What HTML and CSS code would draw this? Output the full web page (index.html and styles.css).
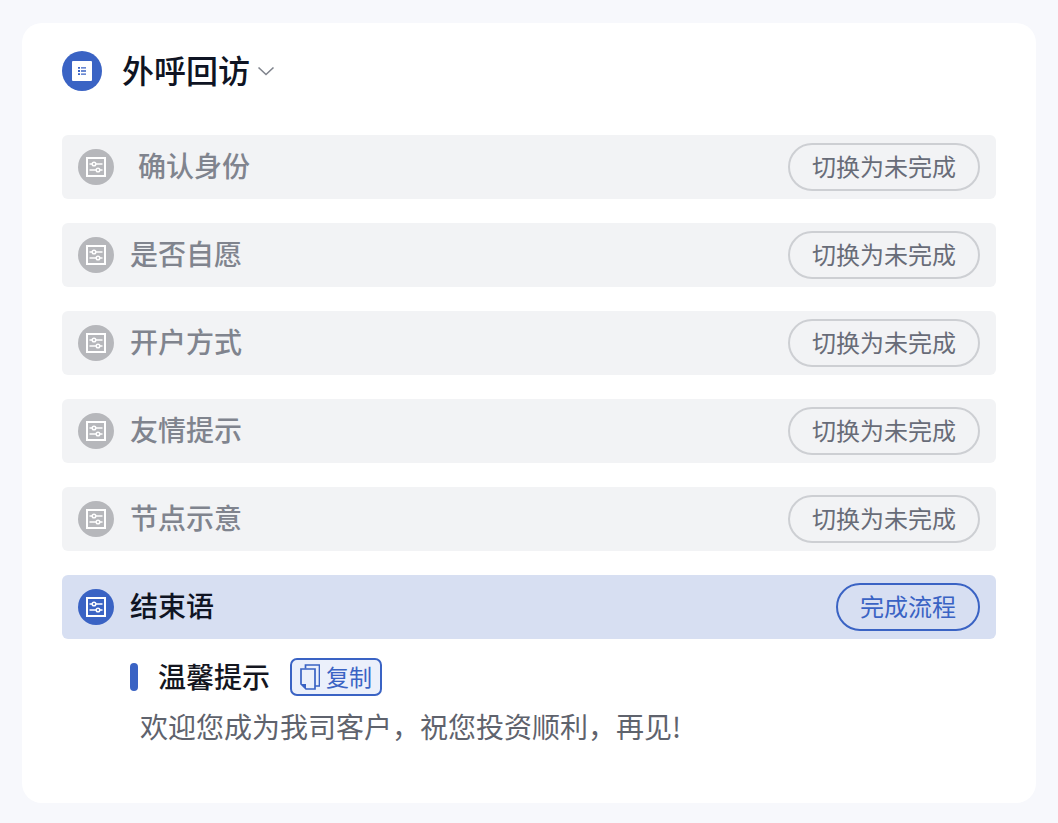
FILE: index.html
```html
<!DOCTYPE html>
<html lang="zh-CN">
<head>
    <meta charset="UTF-8">
    <title>外呼回访</title>
    <link rel="stylesheet" href="styles.css">
</head>
<body>
    <svg class="defs">
        <symbol id="slider" viewBox="0 0 20 20">
            <path d="M1 1h18v18H1z" fill="none" stroke="#fff" stroke-width="2"/>
            <path d="M3.5 7h13M3.5 13h13" stroke="#fff" stroke-width="1.6"/>
            <circle cx="8" cy="7" r="1.8" fill="currentColor" stroke="#fff" stroke-width="1.5"/>
            <circle cx="12" cy="13" r="1.8" fill="currentColor" stroke="#fff" stroke-width="1.5"/>
        </symbol>
    </svg>
    <div class="card">
        <header class="title-bar">
            <span class="title-icon">
                <svg width="20" height="20" viewBox="0 0 20 20">
                    <rect width="20" height="20" rx="1" fill="#fff"/>
                    <path d="M6 6h2v1.8H6zM6 9.1h2v1.8H6zM6 12.2h2V14H6zM9 6.2h5v1.4H9zM9 9.3h5v1.4H9zM9 12.4h5v1.4H9z" fill="#3a63c4"/>
                </svg>
            </span>
            <h1>外呼回访</h1>
            <svg class="caret" width="18" height="10" viewBox="0 0 18 10">
                <path d="M1.5 1.5L9 8.5l7.5-7" fill="none" stroke="#7f838c" stroke-width="1.6"/>
            </svg>
        </header>

        <div class="row">
            <span class="row-icon"><svg width="20" height="20"><use href="#slider"/></svg></span>
            <span class="row-name first">确认身份</span>
            <button class="btn">切换为未完成</button>
        </div>
        <div class="row">
            <span class="row-icon"><svg width="20" height="20"><use href="#slider"/></svg></span>
            <span class="row-name">是否自愿</span>
            <button class="btn">切换为未完成</button>
        </div>
        <div class="row">
            <span class="row-icon"><svg width="20" height="20"><use href="#slider"/></svg></span>
            <span class="row-name">开户方式</span>
            <button class="btn">切换为未完成</button>
        </div>
        <div class="row">
            <span class="row-icon"><svg width="20" height="20"><use href="#slider"/></svg></span>
            <span class="row-name">友情提示</span>
            <button class="btn">切换为未完成</button>
        </div>
        <div class="row">
            <span class="row-icon"><svg width="20" height="20"><use href="#slider"/></svg></span>
            <span class="row-name">节点示意</span>
            <button class="btn">切换为未完成</button>
        </div>
        <div class="row active">
            <span class="row-icon"><svg width="20" height="20"><use href="#slider"/></svg></span>
            <span class="row-name">结束语</span>
            <button class="btn">完成流程</button>
        </div>

        <section class="tip">
            <div class="tip-head">
                <span class="tip-mark"></span>
                <h2>温馨提示</h2>
                <button class="copy">
                    <svg width="20" height="26" viewBox="0 0 20 26">
                        <path d="M5.5 4.5V1h14v21h-4.5" fill="none" stroke="#3a63c4" stroke-width="1.7"/>
                        <path d="M1 5h14v20H6l-5-5z" fill="none" stroke="#3a63c4" stroke-width="1.7"/>
                        <path d="M1 20h5v5z" fill="#3a63c4"/>
                    </svg>
                    <span class="copy-label">复制</span>
                </button>
            </div>
            <p class="tip-text">欢迎您成为我司客户，祝您投资顺利，再见!</p>
        </section>
    </div>
</body>
</html>
```

FILE: styles.css
```css
body {
    margin: 0;
    padding: 23px 22px 20px;
    background-color: #f7f8fc;
    font-family: "Noto Sans CJK SC", "Noto Sans", sans-serif;
}

.defs {
    display: none;
}

.card {
    height: 780px;
    box-sizing: border-box;
    padding: 28px 40px 0;
    background-color: #fff;
    border-radius: 20px;
}

.title-bar {
    display: flex;
    align-items: center;
    height: 40px;
    margin-bottom: 44px;
}

.title-icon {
    display: flex;
    align-items: center;
    justify-content: center;
    width: 40px;
    height: 40px;
    margin-right: 20px;
    border-radius: 50%;
    background-color: #3a63c4;
}

h1 {
    margin: 0 7px 0 0;
    padding-bottom: 4px;
    font-size: 32px;
    font-weight: 500;
    color: #0f1423;
}

.row {
    display: flex;
    align-items: center;
    height: 64px;
    margin-bottom: 24px;
    padding: 0 16px;
    background-color: #f2f3f5;
    border-radius: 6px;
}

.row-icon {
    display: flex;
    align-items: center;
    justify-content: center;
    width: 36px;
    height: 36px;
    margin-right: 16px;
    border-radius: 50%;
    background-color: #b6b7bb;
    color: #b6b7bb;
}

.row-name {
    flex: 1;
    padding-bottom: 4px;
    font-size: 28px;
    font-weight: 500;
    color: #80848e;
}

.row-name.first {
    padding-left: 8px;
}

.btn {
    height: 48px;
    padding: 0 22px 4px;
    background: none;
    border: 2px solid #cdcfd3;
    border-radius: 24px;
    font-family: inherit;
    font-size: 24px;
    color: #686c78;
}

.row.active {
    background-color: #d7dff2;
}

.row.active .row-icon {
    background-color: #3a63c4;
    color: #3a63c4;
}

.row.active .row-name {
    color: #0f1423;
}

.row.active .btn {
    border-color: #3a63c4;
    color: #3a63c4;
}

.tip {
    margin-top: -5px;
    padding-left: 68px;
}

.tip-head {
    display: flex;
    align-items: center;
    height: 38px;
}

.tip-mark {
    width: 8px;
    height: 28px;
    margin-right: 20px;
    border-radius: 4px;
    background-color: #3a63c4;
}

h2 {
    margin: 0 20px 0 0;
    padding-bottom: 3px;
    font-size: 28px;
    font-weight: 500;
    color: #14161f;
}

.copy {
    display: flex;
    align-items: center;
    gap: 6px;
    height: 38px;
    padding: 0 8px;
    background-color: #ebf0fb;
    border: 2px solid #3a63c4;
    border-radius: 7px;
    font-family: inherit;
    font-size: 23px;
    color: #3a63c4;
}

.copy-label {
    padding-bottom: 3px;
}

.tip-text {
    margin: 10px 0 0 10px;
    font-size: 28px;
    line-height: 40px;
    color: #5f636d;
}
```
